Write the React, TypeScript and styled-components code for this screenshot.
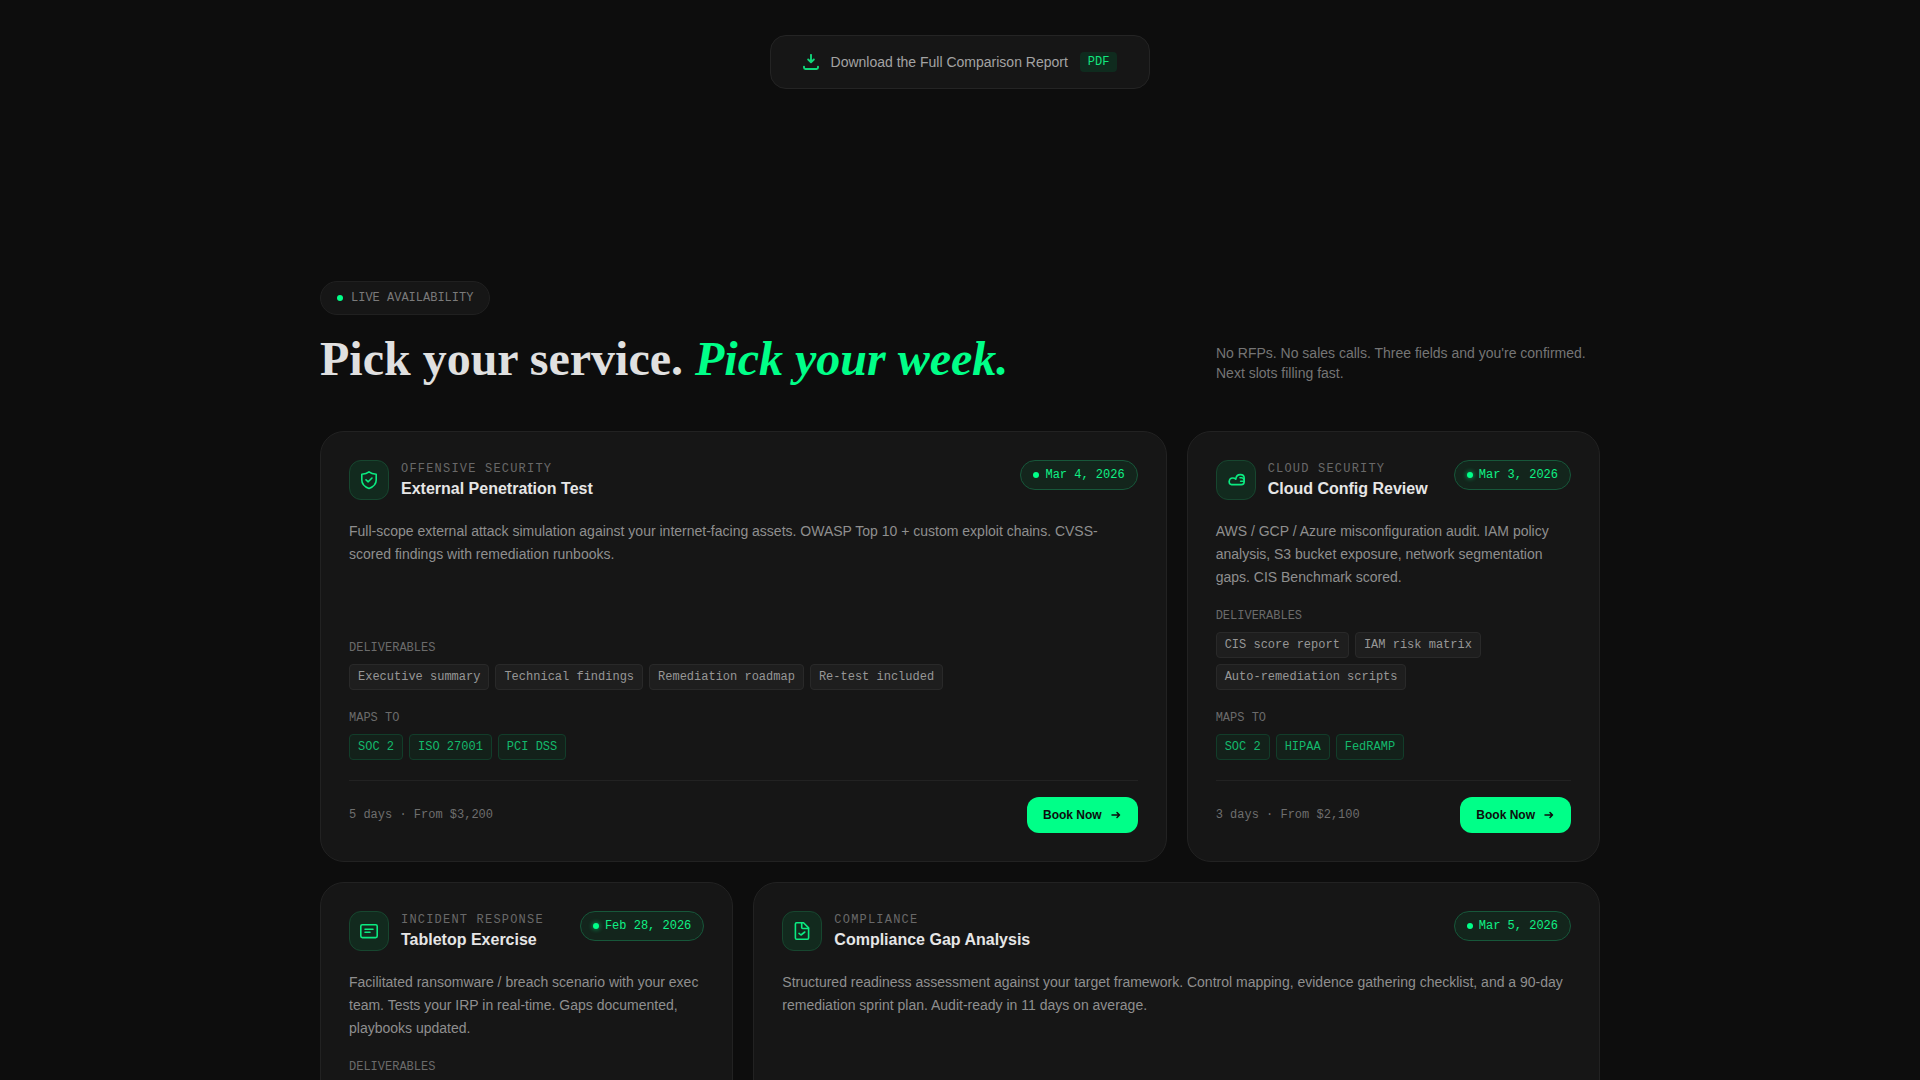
import React from "react";
import styled, { createGlobalStyle } from "styled-components";

const sans = `"Liberation Sans", Arial, sans-serif`;
const serif = `"Liberation Serif", "Times New Roman", serif`;
const mono = `"Liberation Mono", "Courier New", monospace`;
const green = "#00ff88";

const GlobalStyle = createGlobalStyle`
  *, *::before, *::after { box-sizing: border-box; }
  html { background: #0d0d0d; scrollbar-width: none; }
  body { margin: 0; background: #0d0d0d; color: #e8e8e8; font-family: ${sans}; }
  h2, h3, p, ul { margin: 0; padding: 0; }
`;

const Page = styled.main`
  padding: 35px 24px 96px;
`;

const DownloadRow = styled.div`
  display: flex;
  justify-content: center;
`;

const DownloadLink = styled.a`
  display: inline-flex;
  align-items: center;
  height: 54px;
  padding: 0 32px;
  border: 1px solid #242424;
  border-radius: 16px;
  background: #161616;
  color: #a3a3a3;
  font-size: 14px;
  line-height: 20px;
  text-decoration: none;
  svg { width: 16px; height: 16px; margin-right: 12px; }
`;

const FileType = styled.span`
  margin-left: 12px;
  padding: 0 8px;
  border-radius: 4px;
  background: #0f2b1e;
  color: #12e67f;
  font: 12px/20px ${mono};
`;

const Section = styled.section`
  max-width: 1280px;
  margin: 192px auto 0;
`;

const LiveBadge = styled.div`
  display: inline-flex;
  align-items: center;
  gap: 8px;
  height: 34px;
  padding: 0 16px;
  border: 1px solid #202020;
  border-radius: 17px;
  background: #161616;
  color: #7a7a7a;
  font: 12px/18px ${mono};
`;

const Dot = styled.span<{ $glow?: boolean }>`
  flex: none;
  width: 6px;
  height: 6px;
  border-radius: 50%;
  background: ${green};
  box-shadow: ${(p) => (p.$glow ? "0 0 4px 1px rgba(0, 255, 136, 0.4)" : "none")};
`;

const Intro = styled.div`
  display: flex;
  align-items: flex-end;
  justify-content: space-between;
  gap: 24px;
  margin: 20px 0 48px;
`;

const Heading = styled.h2`
  font: bold 48px/48px ${serif};
  color: #e0e0e0;
  em { color: ${green}; }
`;

const Lead = styled.p`
  width: 384px;
  color: #757575;
  font-size: 14px;
  line-height: 20px;
`;

const Grid = styled.div`
  display: grid;
  grid-template-columns: repeat(3, minmax(0, 1fr));
  gap: 20px;
`;

const Card = styled.article<{ $wide?: boolean }>`
  grid-column: span ${(p) => (p.$wide ? 2 : 1)};
  display: flex;
  flex-direction: column;
  padding: 28px;
  border: 1px solid #222;
  border-radius: 24px;
  background: #161616;
`;

const CardHead = styled.header`
  display: flex;
  align-items: flex-start;
  gap: 12px;
`;

const IconTile = styled.div`
  display: grid;
  place-items: center;
  flex: none;
  width: 40px;
  height: 40px;
  border: 1px solid #17462f;
  border-radius: 12px;
  background: #122a1e;
  svg { width: 20px; height: 20px; }
`;

const Titles = styled.div`
  flex: 1;
`;

const Category = styled.p`
  color: #696969;
  font: 12px/18px ${mono};
  letter-spacing: 0.1em;
`;

const Title = styled.h3`
  color: #e6e6e6;
  font-size: 16px;
  line-height: 22px;
`;

const DatePill = styled.time`
  display: inline-flex;
  align-items: center;
  gap: 6px;
  height: 30px;
  padding: 0 12px;
  border: 1px solid #17573a;
  border-radius: 15px;
  background: #13251c;
  color: #0ff085;
  font: 12px/16px ${mono};
`;

const Description = styled.p`
  flex: 1;
  margin: 20px 0 18px;
  color: #8f8f8f;
  font-size: 14px;
  line-height: 23px;
`;

const Label = styled.p`
  margin-bottom: 7px;
  color: #6b6b6b;
  font: 12px/18px ${mono};
`;

const Chips = styled.ul<{ $last?: boolean }>`
  display: flex;
  flex-wrap: wrap;
  gap: 6px;
  margin-bottom: ${(p) => (p.$last ? 20 : 19)}px;
  list-style: none;
`;

const Chip = styled.li<{ $accent?: boolean }>`
  padding: 3px 8px;
  border: 1px solid ${(p) => (p.$accent ? "#123d2a" : "#292929")};
  border-radius: 4px;
  background: ${(p) => (p.$accent ? "#13211a" : "#1e1e1e")};
  color: ${(p) => (p.$accent ? "#13b96c" : "#979797")};
  font: 12px/18px ${mono};
`;

const CardFoot = styled.footer`
  display: flex;
  align-items: center;
  justify-content: space-between;
  padding-top: 16px;
  border-top: 1px solid #222;
`;

const Terms = styled.span`
  color: #6e6e6e;
  font: 12px/19px ${mono};
`;

const BookButton = styled.button`
  display: inline-flex;
  align-items: center;
  gap: 8px;
  height: 36px;
  padding: 0 16px;
  border: 0;
  border-radius: 12px;
  background: ${green};
  color: #0d0d0d;
  font: bold 12px/16px ${sans};
  cursor: pointer;
  svg { width: 12px; height: 12px; }
`;

const stroke = {
  fill: "none",
  stroke: green,
  strokeLinecap: "round" as const,
  strokeLinejoin: "round" as const,
};

const DownloadIcon = () => (
  <svg viewBox="0 0 16 16" {...stroke} stroke="#10d67a" strokeWidth="1.9" aria-hidden="true">
    <path d="M8 .9v7.2M5.200 5.500 8 8.300l2.800-2.800M1 12.600v1a1.400 1.400 0 0 0 1.400 1.400h11.200A1.400 1.400 0 0 0 15 13.600v-1" />
  </svg>
);

const ShieldIcon = () => (
  <svg viewBox="0 0 20 20" {...stroke} stroke="#0bea80" strokeWidth="1.6" aria-hidden="true">
    <path d="M10 1.800c1.800 1.500 4.300 2.200 7.200 2.400V10c0 4.200-3 6.900-7.200 8.400C5.800 16.900 2.800 14.200 2.800 10V4.200C5.700 4 8.200 3.300 10 1.800Z" />
    <path d="m7 9.800 2.200 2L13 8" />
  </svg>
);

const CloudIcon = () => (
  <svg viewBox="0 0 20 20" {...stroke} stroke="#0bea80" strokeWidth="1.600" aria-hidden="true">
    <path d="M5.600 14.600a2.600 2.600 0 0 1-2.400-2.700C3.200 9.600 4.600 8 6.800 8c1.200 0 2.200.4 3 1.200C10 6.400 12 4.600 14.400 4.600c2.300 0 3.800 1.600 3.800 3.600v3.600c0 1.700-1.200 2.800-2.800 2.800Z" />
    <path d="M14 7.800h1.600c1 0 1.800.7 2.200 1.600M14.600 11.200h3" />
  </svg>
);

const BoardIcon = () => (
  <svg viewBox="0 0 20 20" {...stroke} stroke="#0bea80" strokeWidth="1.600" aria-hidden="true">
    <rect x="1.800" y="3.800" width="16.400" height="12.800" rx="1.500" />
    <path d="M6 8.300h8M6 11.300h5" />
  </svg>
);

const FileIcon = () => (
  <svg viewBox="0 0 20 20" {...stroke} stroke="#0bea80" strokeWidth="1.600" aria-hidden="true">
    <path d="M11.500 1.800H4.600a1.200 1.200 0 0 0-1.200 1.200v14a1.200 1.200 0 0 0 1.200 1.200h10.800a1.200 1.200 0 0 0 1.200-1.200V6.900Z" />
    <path d="M9.700 2v4.500a1 1 0 0 0 1 1h5.700M7 12.400l2 1.600 3.800-3" />
  </svg>
);

const ArrowIcon = () => (
  <svg viewBox="0 0 12 12" {...stroke} stroke="#0d0d0d" strokeWidth="1.500" aria-hidden="true">
    <path d="M2 6h7.500M7 3.500 9.500 6 7 8.500" />
  </svg>
);

interface Service {
  category: string;
  title: string;
  date: string;
  iso: string;
  wide?: boolean;
  glow?: boolean;
  icon: React.ReactNode;
  description: string;
  deliverables: string[];
  frameworks: string[];
  terms: string;
}

const services: Service[] = [
  {
    category: "OFFENSIVE SECURITY",
    title: "External Penetration Test",
    date: "Mar 4, 2026",
    iso: "2026-03-04",
    wide: true,
    icon: <ShieldIcon />,
    description:
      "Full-scope external attack simulation against your internet-facing assets. OWASP Top 10 + custom exploit chains. CVSS-scored findings with remediation runbooks.",
    deliverables: ["Executive summary", "Technical findings", "Remediation roadmap", "Re-test included"],
    frameworks: ["SOC 2", "ISO 27001", "PCI DSS"],
    terms: "5 days · From $3,200",
  },
  {
    category: "CLOUD SECURITY",
    title: "Cloud Config Review",
    date: "Mar 3, 2026",
    iso: "2026-03-03",
    glow: true,
    icon: <CloudIcon />,
    description:
      "AWS / GCP / Azure misconfiguration audit. IAM policy analysis, S3 bucket exposure, network segmentation gaps. CIS Benchmark scored.",
    deliverables: ["CIS score report", "IAM risk matrix", "Auto-remediation scripts"],
    frameworks: ["SOC 2", "HIPAA", "FedRAMP"],
    terms: "3 days · From $2,100",
  },
  {
    category: "INCIDENT RESPONSE",
    title: "Tabletop Exercise",
    date: "Feb 28, 2026",
    iso: "2026-02-28",
    glow: true,
    icon: <BoardIcon />,
    description:
      "Facilitated ransomware / breach scenario with your exec team. Tests your IRP in real-time. Gaps documented, playbooks updated.",
    deliverables: [],
    frameworks: [],
    terms: "",
  },
  {
    category: "COMPLIANCE",
    title: "Compliance Gap Analysis",
    date: "Mar 5, 2026",
    iso: "2026-03-05",
    wide: true,
    icon: <FileIcon />,
    description:
      "Structured readiness assessment against your target framework. Control mapping, evidence gathering checklist, and a 90-day remediation sprint plan. Audit-ready in 11 days on average.",
    deliverables: [],
    frameworks: [],
    terms: "",
  },
];

const ServiceCard = ({ service }: { service: Service }) => (
  <Card $wide={service.wide}>
    <CardHead>
      <IconTile>{service.icon}</IconTile>
      <Titles>
        <Category>{service.category}</Category>
        <Title>{service.title}</Title>
      </Titles>
      <DatePill dateTime={service.iso}>
        <Dot $glow={service.glow} />
        {service.date}
      </DatePill>
    </CardHead>
    <Description>{service.description}</Description>
    {(service.deliverables.length > 0 || !service.wide) && <Label>DELIVERABLES</Label>}
    {service.deliverables.length > 0 && (
      <>
        <Chips>
          {service.deliverables.map((d) => (
            <Chip key={d}>{d}</Chip>
          ))}
        </Chips>
        <Label>MAPS TO</Label>
        <Chips $last>
          {service.frameworks.map((f) => (
            <Chip key={f} $accent>
              {f}
            </Chip>
          ))}
        </Chips>
        <CardFoot>
          <Terms>{service.terms}</Terms>
          <BookButton type="button">
            Book Now
            <ArrowIcon />
          </BookButton>
        </CardFoot>
      </>
    )}
  </Card>
);

export default function App() {
  return (
    <>
      <GlobalStyle />
      <Page>
        <DownloadRow>
          <DownloadLink href="#report">
            <DownloadIcon />
            Download the Full Comparison Report
            <FileType>PDF</FileType>
          </DownloadLink>
        </DownloadRow>
        <Section>
          <LiveBadge>
            <Dot />
            LIVE AVAILABILITY
          </LiveBadge>
          <Intro>
            <Heading>
              Pick your service. <em>Pick your week.</em>
            </Heading>
            <Lead>No RFPs. No sales calls. Three fields and you're confirmed. Next slots filling fast.</Lead>
          </Intro>
          <Grid>
            {services.map((s) => (
              <ServiceCard key={s.title} service={s} />
            ))}
          </Grid>
        </Section>
      </Page>
    </>
  );
}
